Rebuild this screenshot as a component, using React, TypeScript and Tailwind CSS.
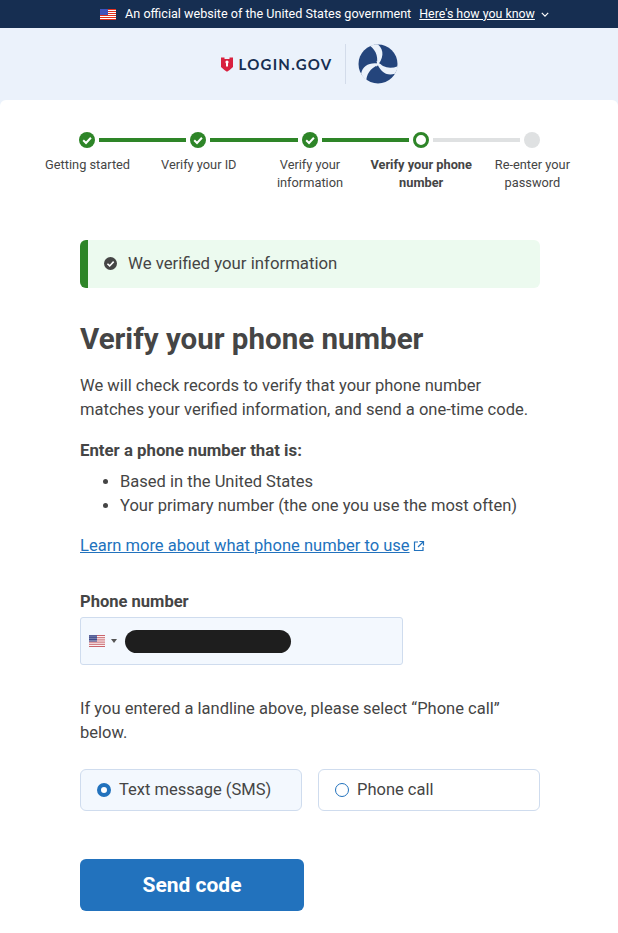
import type { ReactNode } from "react";

const font = { fontFamily: "Roboto, 'Liberation Sans', sans-serif" };

function UsFlag({ className, muted }: { className: string; muted?: boolean }) {
  const red = muted ? "#c9646c" : "#e0301e";
  const blue = muted ? "#3f4a8a" : "#1e33b1";
  return (
    <svg viewBox="0 0 16 11" preserveAspectRatio="none" className={className}>
      <rect width="16" height="11" fill="#fff" />
      {[0, 2, 4, 6, 8, 10].map((y) => (
        <rect key={y} y={y} width="16" height="1" fill={red} />
      ))}
      <rect width="8" height="6" fill={blue} />
      {[1, 3, 5].map((y) =>
        [1, 3, 5, 7].map((x) => <rect key={`${x}-${y}`} x={x - 0.4} y={y - 0.4} width="0.8" height="0.8" fill="#fff" />)
      )}
    </svg>
  );
}

function CheckDot({ className, color }: { className: string; color: string }) {
  return (
    <svg viewBox="0 0 16 16" className={className}>
      <circle cx="8" cy="8" r="8" fill={color} />
      <path d="M4.2 8.3 L7 11 L11.9 5.7" fill="none" stroke="#fff" strokeWidth="2" />
    </svg>
  );
}

function Logo() {
  const blade = "M20 0.5 C26.5 6 26 15 18 23 C21 14 18.5 7 12 1.8 C14 1 17 0.4 20 0.5 Z";
  return (
    <div className="flex items-center pl-px">
      <svg viewBox="0 0 12 15" className="h-[15px] w-3">
        <path d="M0 0.5 H3.5 V2 H8.5 V0.5 H12 V10 Q9 13 6 14.7 Q3 13 0 10 Z" fill="#d8213f" />
        <circle cx="6" cy="5" r="1.6" fill="#fff" />
        <rect x="5" y="5" width="2" height="4.5" fill="#fff" />
      </svg>
      <span
        className="ml-[5px] text-[15px] leading-none font-bold tracking-[1.25px] text-[#162e51]"
        style={{ fontFamily: "Lato, sans-serif" }}
      >
        LOGIN.GOV
      </span>
      <div className="mr-[12px] ml-[12px] h-10 w-px bg-[#d3dcea]" />
      <svg viewBox="0 0 40 40" className="h-10 w-10">
        <circle cx="20" cy="20" r="19.5" fill="#24457c" />
        <path d={blade} fill="#ebf2fb" />
        <path d={blade} fill="#ebf2fb" transform="rotate(120 20 20)" />
        <path d={blade} fill="#ebf2fb" transform="rotate(240 20 20)" />
      </svg>
    </div>
  );
}

function Stepper() {
  const steps = [
    { label: "Getting started", state: "done" },
    { label: "Verify your ID", state: "done" },
    { label: "Verify your information", state: "done" },
    { label: "Verify your phone number", state: "current" },
    { label: "Re-enter your password", state: "todo" },
  ];
  return (
    <div className="pt-8">
      <div className="flex items-center pr-[78px] pl-[79px]">
        {steps.map((s, i) => (
          <div key={s.label} className={i < 4 ? "flex flex-1 items-center" : "flex items-center"}>
            {s.state === "done" && <CheckDot className="h-4 w-4 shrink-0" color="#2e8528" />}
            {s.state === "current" && <div className="h-4 w-4 shrink-0 rounded-full border-[3px] border-[#2e8528] bg-white" />}
            {s.state === "todo" && <div className="h-4 w-4 shrink-0 rounded-full bg-[#dfe1e2]" />}
            {i < 4 && <div className={`mx-1 h-1 flex-1 ${i < 3 ? "bg-[#2e8528]" : "bg-[#dfe1e2]"}`} />}
          </div>
        ))}
      </div>
      <div className="mt-2 grid grid-cols-5 pr-[30px] pl-[32px]">
        {steps.map((s) => (
          <div
            key={s.label}
            className={`text-center text-[12.8px] leading-[18px] text-[#454545] ${s.state === "current" ? "px-0 font-bold" : "px-2"}`}
          >
            {s.label}
          </div>
        ))}
      </div>
    </div>
  );
}

function RadioCard({ checked, children }: { checked?: boolean; children: ReactNode }) {
  return (
    <div
      className={`flex h-[42px] flex-1 items-center rounded-md border border-[#cfdcee] pl-4 ${checked ? "bg-[#f3f8fe]" : "bg-white"}`}
    >
      {checked ? (
        <div className="h-[14px] w-[14px] rounded-full border-[4px] border-[#2272bd] bg-white" />
      ) : (
        <div className="h-[14px] w-[14px] rounded-full border border-[#2272bd] bg-white" />
      )}
      <span className="ml-2 text-[16.5px] text-[#454545]">{children}</span>
    </div>
  );
}

export default function App() {
  return (
    <div className="h-[933px] overflow-hidden bg-[#ebf2fb]" style={font}>
      <div className="flex h-7 items-center justify-center bg-[#162e51] pl-[31px] text-[12.6px] text-white">
        <UsFlag className="h-[11px] w-4" />
        <span className="ml-[9px]">An official website of the United States government</span>
        <span className="ml-2 text-[12.4px] underline">Here's how you know</span>
        <svg viewBox="0 0 10 6" className="ml-[6px] h-[5px] w-2">
          <path d="M1 1 L5 5 L9 1" fill="none" stroke="#fff" strokeWidth="1.5" />
        </svg>
      </div>

      <header className="flex h-[72px] items-center justify-center">
        <Logo />
      </header>

      <main className="h-full rounded-t-md bg-white">
        <Stepper />

        <div className="ml-20 w-[460px] pt-[48px] text-[16.55px] leading-6 text-[#454545]">
          <div className="flex h-12 items-center overflow-hidden rounded-md border-l-8 border-[#2e8528] bg-[#ecfaef] pl-4">
            <CheckDot className="mb-px h-[13px] w-[13px]" color="#454545" />
            <span className="mb-[2px] ml-[11px] text-[16.8px]">We verified your information</span>
          </div>

          <h1 className="mt-[33px] text-[29.5px] leading-[36px] font-bold">Verify your phone number</h1>

          <p className="mt-[17px]">
            We will check records to verify that your phone number matches your verified information, and send a one-time code.
          </p>

          <p className="mt-4 text-[16.8px] font-bold">Enter a phone number that is:</p>
          <ul className="mt-2 list-disc pl-10">
            <li>Based in the United States</li>
            <li>Your primary number (the one you use the most often)</li>
          </ul>

          <div className="mt-4 flex items-center text-[#2272bd]">
            <span className="underline">Learn more about what phone number to use</span>
            <svg viewBox="0 0 12 12" className="ml-[3px] h-3 w-3" fill="none" stroke="#2272bd" strokeWidth="1.2">
              <path d="M5 2 H1.5 V10.5 H10 V7" />
              <path d="M6.5 1.5 H10.5 V5.5 M10.5 1.5 L5 7" />
            </svg>
          </div>

          <label className="mt-8 block font-bold">Phone number</label>
          <div className="mt-[3px] flex h-12 w-[323px] items-center rounded-[3px] border border-[#cfdcee] bg-[#f3f8fe] pl-2">
            <UsFlag className="h-3 w-4" muted />
            <div className="mb-px ml-[6px] h-0 w-0 border-x-[3px] border-t-[4px] border-x-transparent border-t-[#555]" />
            <div className="ml-2 h-[23px] w-[166px] rounded-full bg-[#1e1e1e]" />
          </div>

          <p className="mt-8">If you entered a landline above, please select “Phone call” below.</p>

          <div className="mt-6 flex gap-4">
            <RadioCard checked>Text message (SMS)</RadioCard>
            <RadioCard>Phone call</RadioCard>
          </div>

          <button className="mt-12 h-[52px] w-[224px] rounded-md bg-[#2272bd] text-[21px] font-bold text-white">
            Send code
          </button>
        </div>
      </main>
    </div>
  );
}
